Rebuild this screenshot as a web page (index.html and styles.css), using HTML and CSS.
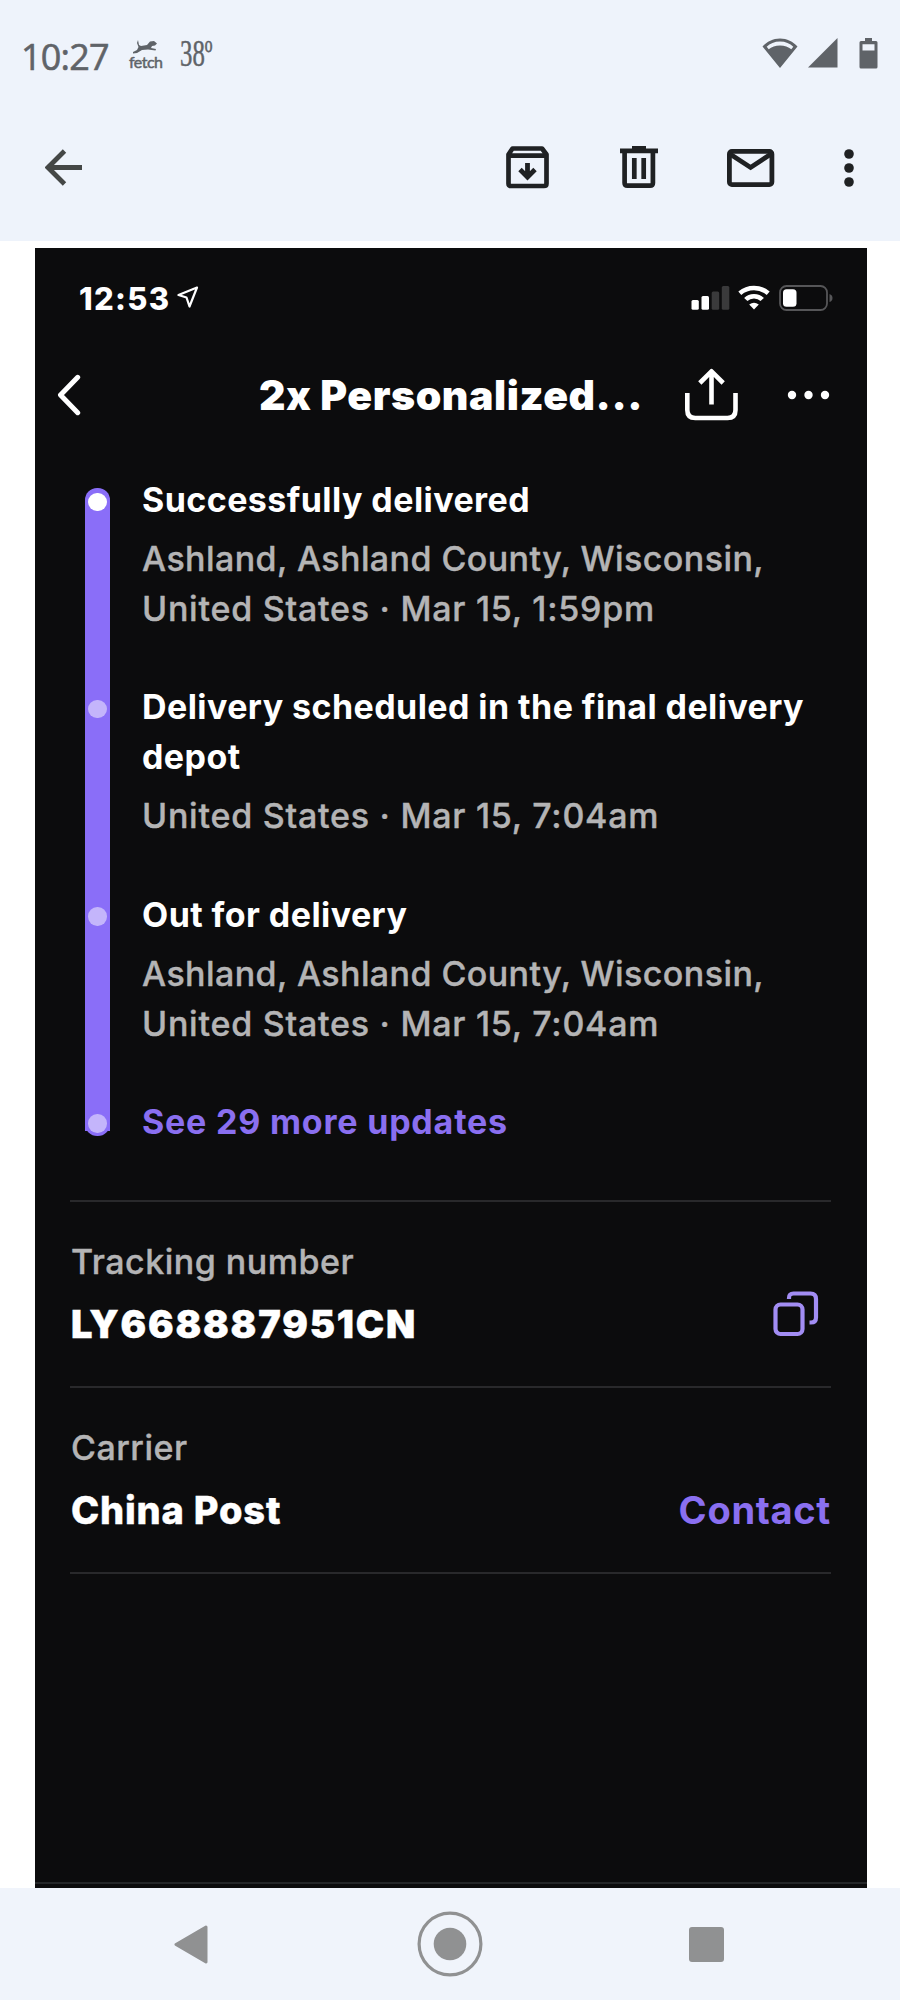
FILE: index.html
```html
<!DOCTYPE html>
<html lang="en">
<head>
    <meta charset="UTF-8">
    <meta name="viewport" content="width=device-width, initial-scale=1.0">
    <title>Order tracking</title>
    <link rel="stylesheet" href="styles.css">
</head>
<body>
    <header class="top">
        <div class="status">
            <span class="clock">10:27</span>
            <div class="fetch">
                <svg width="24" height="14" viewBox="0 0 24 14">
                    <path d="M5 0L6 5L8 6L14 5L17 1.500L21 1L24 3.500L22 5.500L19 6L18 8L23 9L22.500 10.500L15 9.500L9 10L4 13L0 13.500V12L4 10L5.500 7L4 3Z" fill="#5f6368"/>
                </svg>
                <span>fetch</span>
            </div>
            <span class="temp">38º</span>
            <div class="status-icons">
                <svg class="wifi" width="36" height="30" viewBox="0 0 36 30">
                    <path d="M18 .5C11 .5 5 3.500 .5 8.500L18 30L35.500 8.500C31 3.500 25 .5 18 .5ZM18 3.500C23.500 3.500 28 5.500 31.300 8.800L29.300 11.300C26.500 9 22.500 7.500 18 7.500S9.500 9 6.700 11.300L4.700 8.800C8 5.500 12.500 3.500 18 3.500Z" fill="#5f6368" fill-rule="evenodd"/>
                </svg>
                <svg class="cell" width="30" height="30" viewBox="0 0 30 30">
                    <path d="M29.500 0V29.500H0Z" fill="#5f6368"/>
                </svg>
                <svg width="19" height="31" viewBox="0 0 19 31">
                    <path d="M6 0H13V3H17Q18.500 3 18.500 4.500V29Q18.500 30.500 17 30.500H2Q.5 30.500 .5 29V4.500Q.5 3 2 3H6ZM3.500 6.300V12.500H15.500V6.300Z" fill="#5f6368" fill-rule="evenodd"/>
                </svg>
            </div>
        </div>
        <nav class="toolbar">
            <svg class="back" width="38" height="37" viewBox="0 0 38 37">
                <path d="M19.500 2L3 18.500L19.500 35M3 18.500H37" fill="none" stroke="#444746" stroke-width="4.800"/>
            </svg>
            <svg class="archive" width="43" height="43" viewBox="0 0 43 43">
                <path d="M2.500 8.500L6.500 2.500H36L40.500 8.500V37.500Q40.500 40 38 40H5Q2.500 40 2.500 37.500ZM2.500 9.700H40.500" fill="none" stroke="#1f2123" stroke-width="4.700" stroke-linejoin="round"/>
                <path d="M21.500 17V31M14 23.500L21.500 31L29 23.500" fill="none" stroke="#1f2123" stroke-width="4.800"/>
            </svg>
            <svg class="trash" width="38" height="43" viewBox="0 0 38 43">
                <path d="M0 4.800H38M12 2.300H26" fill="none" stroke="#1f2123" stroke-width="4.700"/>
                <path d="M4.600 5V37Q4.600 39.700 7.500 39.700H30Q32.900 39.700 32.900 37V5M14.300 12V33M23.700 12V33" fill="none" stroke="#1f2123" stroke-width="4.700"/>
            </svg>
            <svg class="mail" width="48" height="38" viewBox="0 0 48 38">
                <rect x="2.400" y="2.400" width="42.500" height="33.200" rx="2.500" fill="none" stroke="#1f2123" stroke-width="4.800"/>
                <path d="M3 5L23.600 18.500L44 5" fill="none" stroke="#1f2123" stroke-width="4.800"/>
            </svg>
            <svg class="more" width="10" height="38" viewBox="0 0 10 38">
                <circle cx="5" cy="5" r="4.800" fill="#1f2123"/>
                <circle cx="5" cy="19" r="4.800" fill="#1f2123"/>
                <circle cx="5" cy="33" r="4.800" fill="#1f2123"/>
            </svg>
        </nav>
    </header>

    <main class="phone">
        <div class="ios-status">
            <span class="ios-time">12:53</span>
            <svg class="location" width="22" height="22" viewBox="0 0 22 22">
                <path d="M20 1.500L1.500 9L9.500 11.500L12.500 20.500Z" fill="none" stroke="#fff" stroke-width="2.200" stroke-linejoin="round"/>
            </svg>
            <svg class="bars" width="39" height="26" viewBox="0 0 39 26">
                <rect x=".5" y="15" width="7.300" height="9.800" rx="1.500" fill="#fff"/>
                <rect x="10.500" y="11" width="7.500" height="13.800" rx="1.500" fill="#fff"/>
                <rect x="20.700" y="6.500" width="7.500" height="18.300" rx="1.500" fill="#3a3a3b"/>
                <rect x="30.800" y="1" width="7.500" height="23.800" rx="1.500" fill="#3a3a3b"/>
            </svg>
            <svg class="ios-wifi" width="32" height="26" viewBox="0 0 32 26">
                <path d="M1.800 8.200Q8 3 16 3T30.200 8.200M7.800 14.500Q11 11.200 16 11.200T24.200 14.500" fill="none" stroke="#fff" stroke-width="4.600"/>
                <path d="M11.200 19.500Q16 15.800 20.800 19.500L16 24.500Z" fill="#fff"/>
            </svg>
            <svg class="battery" width="54" height="26" viewBox="0 0 54 26">
                <rect x="1" y="1" width="47" height="24" rx="6.500" fill="none" stroke="#565658" stroke-width="1.800"/>
                <rect x="4" y="4.300" width="13.500" height="17.500" rx="3.500" fill="#fff"/>
                <path d="M50.500 9Q53.500 10 53.500 13T50.500 17Z" fill="#565658"/>
            </svg>
        </div>

        <div class="title-bar">
            <svg class="chevron" width="24" height="42" viewBox="0 0 24 42">
                <path d="M20.700 3.300L3.500 21L20.700 38.700" fill="none" stroke="#fff" stroke-width="5" stroke-linecap="round" stroke-linejoin="round"/>
            </svg>
            <h1>2x Personalized...</h1>
            <svg class="share" width="53" height="53" viewBox="0 0 53 53">
                <path d="M2.300 25V42Q2.300 50 10.300 50H42.500Q50.500 50 50.500 42V25" fill="none" stroke="#fff" stroke-width="4.600"/>
                <path d="M26.500 36.500V3.500M14.800 15L26.500 3.300L38.200 15" fill="none" stroke="#fff" stroke-width="4.600" stroke-linejoin="round"/>
            </svg>
            <svg width="43" height="10" viewBox="0 0 43 10">
                <circle cx="5" cy="5" r="4.200" fill="#fff"/>
                <circle cx="21.500" cy="5" r="4.200" fill="#fff"/>
                <circle cx="38" cy="5" r="4.200" fill="#fff"/>
            </svg>
        </div>

        <ul class="timeline">
            <li>
                <div class="rail first"><i></i></div>
                <div class="update">
                    <h2>Successfully delivered</h2>
                    <p class="place">Ashland, Ashland County, Wisconsin,</p>
                    <p>United States · Mar 15, 1:59pm</p>
                </div>
            </li>
            <li>
                <div class="rail"><i></i></div>
                <div class="update">
                    <h2>Delivery scheduled in the final delivery<br>depot</h2>
                    <p>United States · Mar 15, 7:04am</p>
                </div>
            </li>
            <li>
                <div class="rail"><i></i></div>
                <div class="update">
                    <h2>Out for delivery</h2>
                    <p class="place">Ashland, Ashland County, Wisconsin,</p>
                    <p>United States · Mar 15, 7:04am</p>
                </div>
            </li>
            <li class="last">
                <div class="rail"><i></i></div>
                <a class="see-more">See 29 more updates</a>
            </li>
        </ul>

        <section class="details">
            <div class="row">
                <div>
                    <p class="label">Tracking number</p>
                    <p class="value number">LY668887951CN</p>
                </div>
                <svg class="copy" width="47" height="46" viewBox="0 0 47 46">
                    <rect x="2.500" y="13.500" width="27" height="29.500" rx="5" fill="none" stroke="#a28df3" stroke-width="4.200"/>
                    <path d="M16 8V7Q16 2.500 20.500 2.500H37.500Q43 2.500 43 8V26.500Q43 31.500 38 31.500H36.500" fill="none" stroke="#a28df3" stroke-width="4.200"/>
                </svg>
            </div>
            <div class="row">
                <div>
                    <p class="label">Carrier</p>
                    <p class="value">China Post</p>
                </div>
                <a class="contact">Contact</a>
            </div>
        </section>
    </main>

    <footer class="nav">
        <svg class="nav-back" width="34" height="39" viewBox="0 0 34 39">
            <path d="M32 2L2 19.500L32 37Z" fill="#909192" stroke="#909192" stroke-width="3" stroke-linejoin="round"/>
        </svg>
        <svg class="nav-home" width="66" height="66" viewBox="0 0 66 66">
            <circle cx="33" cy="33" r="30.900" fill="none" stroke="#909192" stroke-width="3.200"/>
            <circle cx="33" cy="33" r="16.300" fill="#909192"/>
        </svg>
        <span class="nav-recent"></span>
    </footer>
</body>
</html>
```
FILE: styles.css
```css
*{
    margin: 0;
    padding: 0;
    box-sizing: border-box;
}

body {
    width: 900px;
    height: 2000px;
    background-color: #fff;
    font-family: Inter, "Liberation Sans", sans-serif;
    overflow: hidden;
}

svg {
    display: block;
    flex: none;
}

ul {
    list-style: none;
}

/* android status bar and mail toolbar */
.top {
    height: 241px;
    background-color: #eef3fb;
}

.status {
    display: flex;
    height: 108px;
    padding: 37px 22px 0 21px;
    color: #5f6368;
}

.clock {
    width: 108px;
    font-family: "Open Sans", sans-serif;
    font-size: 36px;
    font-weight: 500;
    line-height: 40px;
    letter-spacing: -0.8px;
    -webkit-text-stroke: 0.6px #5f6368;
}

.fetch {
    width: 51px;
    padding-top: 3px;
}

.fetch svg {
    margin-left: 4px;
}

.fetch span {
    display: block;
    font-family: Lato, sans-serif;
    font-size: 16px;
    line-height: 16px;
    letter-spacing: -0.5px;
    -webkit-text-stroke: 0.5px #5f6368;
}

.temp {
    width: 60px;
    height: 36px;
    font-family: "Liberation Serif", serif;
    font-size: 37px;
    line-height: 34px;
    -webkit-text-stroke: 0.5px #5f6368;
    transform: scaleX(0.67);
    transform-origin: left;
}

.status-icons {
    display: flex;
    margin-left: auto;
    padding-top: 1px;
}

.wifi {
    margin-right: 10px;
}

.cell {
    margin-right: 21px;
}

.toolbar {
    display: flex;
    align-items: center;
    height: 119px;
    padding: 0 46px 0 45px;
}

.archive {
    margin-left: auto;
}

.trash {
    margin-left: 71px;
}

.mail {
    margin-left: 69px;
}

.more {
    margin-left: 69px;
}

/* tracking screen */
.phone {
    width: 832px;
    height: 1640px;
    margin: 7px 0 0 35px;
    background-color: #0c0c0d;
    color: #fff;
}

.ios-status {
    display: flex;
    height: 97px;
    padding: 37px 34px 0 44px;
}

.ios-time {
    width: 98px;
    font-size: 31px;
    font-weight: 800;
    line-height: 28px;
    letter-spacing: 1.3px;
}

.location {
    margin-top: 1px;
}

.bars {
    margin-left: auto;
}

.ios-wifi {
    margin-left: 8px;
}

.battery {
    margin-left: 9px;
}

.title-bar {
    display: flex;
    align-items: center;
    height: 99px;
    padding: 0 36px 0 22px;
}

.title-bar h1 {
    width: 426px;
    margin-left: 178px;
    font-size: 41px;
    font-weight: 900;
    line-height: 48px;
    letter-spacing: 0.55px;
    white-space: nowrap;
}

.share {
    margin-right: 49px;
}

.timeline {
    height: 756px;
    padding: 31px 0 0 50px;
}

.timeline li {
    display: flex;
    height: 207.3px;
}

.rail {
    width: 24.5px;
    padding: 17.5px 0 0 3px;
    background-color: #8a6ef8;
}

.rail i {
    display: block;
    width: 18.5px;
    height: 18.5px;
    border-radius: 50%;
    background-color: #c4b5fb;
}

.first {
    margin-top: 13px;
    padding-top: 4.5px;
    border-radius: 12px 12px 0 0;
}

.first i {
    background-color: #fff;
}

.last .rail {
    height: 34.5px;
}

.last i {
    box-shadow: 0 0 0 3px #8a6ef8;
}

.update, .see-more {
    margin-left: 32.5px;
    font-size: 34px;
    line-height: 50px;
    white-space: nowrap;
}

.update h2, .see-more {
    font-size: 34px;
    font-weight: 700;
    letter-spacing: 0.43px;
}

.update h2 {
    margin-bottom: 9px;
}

.update p {
    color: #b4b4b5;
    font-weight: 500;
    letter-spacing: 0.75px;
    -webkit-text-stroke: 0.4px #b4b4b5;
}

.update .place {
    letter-spacing: 0.42px;
}

.see-more {
    color: #8a6ff0;
    letter-spacing: 0.8px;
}

.details {
    height: 684px;
    padding: 0 36px 0 35px;
    border-bottom: 2px solid #252729;
}

.row {
    display: flex;
    justify-content: space-between;
    height: 186px;
    padding: 35px 0 0 1px;
    border-top: 2px solid #29292b;
}

.row:last-child {
    height: 188px;
    border-bottom: 2px solid #29292b;
}

.label {
    color: #b4b4b5;
    font-size: 34px;
    font-weight: 500;
    line-height: 50px;
    letter-spacing: 0.5px;
    -webkit-text-stroke: 0.4px #b4b4b5;
}

.value {
    margin-top: 11px;
    font-size: 38px;
    font-weight: 800;
    line-height: 53px;
    letter-spacing: 0.8px;
    -webkit-text-stroke: 0.4px #fff;
}

.number {
    font-weight: 900;
    letter-spacing: 1.8px;
}

.contact {
    margin-top: 61px;
    color: #8a6ff0;
    font-size: 38px;
    font-weight: 700;
    line-height: 53px;
    letter-spacing: 0.7px;
}

.copy {
    margin: 54px 11px 0 0;
}

/* android navigation buttons */
.nav {
    display: flex;
    align-items: center;
    height: 112px;
    padding-left: 174px;
    background-color: #f0f4fb;
}

.nav-home {
    margin-left: 209px;
}

.nav-recent {
    width: 35px;
    height: 35px;
    margin-left: 205.5px;
    border-radius: 3px;
    background-color: #909192;
}
```
